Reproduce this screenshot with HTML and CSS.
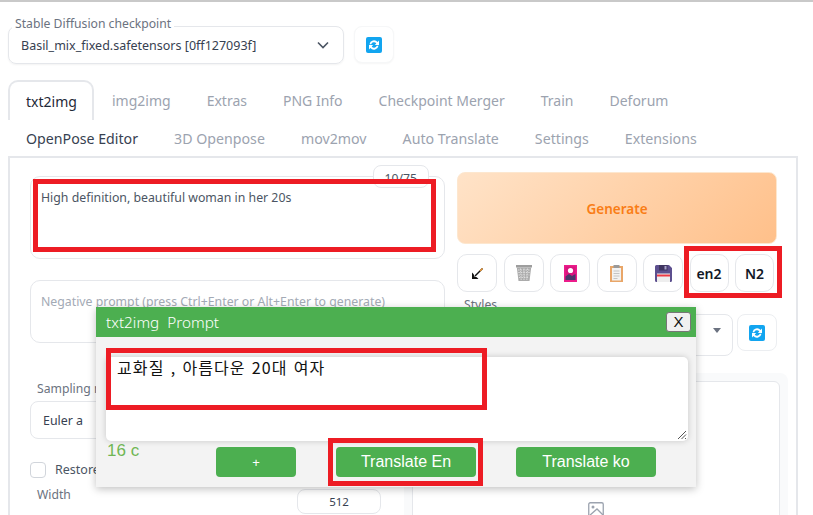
FILE: index.html
```html
<!DOCTYPE html>
<html lang="en">
<head>
<meta charset="utf-8">
<title>Stable Diffusion web UI</title>
<link rel="stylesheet" href="styles.css">
</head>
<body>
<div class="page">
  <div class="checkpoint-row">
    <div class="checkpoint">
      <span class="float-label">Stable Diffusion checkpoint</span>
      <span class="checkpoint-value">Basil_mix_fixed.safetensors [0ff127093f]</span>
      <svg class="chevron" width="12" height="8" viewBox="0 0 12 8"><path d="M1 1.500 6 6.500 11 1.500" fill="none" stroke="#4b5563" stroke-width="1.600"/></svg>
    </div>
    <button class="refresh-btn refresh-top"><svg class="refresh" viewBox="0 0 16 16"><rect width="16" height="16" rx="2" fill="#12a5f0"/><path d="M3.500 7.200A4.600 4.600 0 0 1 11.600 5L13 3.600V8H8.800l1.500-1.500A2.900 2.900 0 0 0 5.200 7.200ZM12.500 8.800A4.600 4.600 0 0 1 4.400 11L3 12.400V8h4.200L5.700 9.500a2.900 2.900 0 0 0 5.100-.7Z" fill="#fff"/></svg></button>
  </div>

  <div class="tabs tabs-first">
    <span class="tab tab-active">txt2img</span>
    <span class="tab">img2img</span>
    <span class="tab">Extras</span>
    <span class="tab">PNG Info</span>
    <span class="tab">Checkpoint Merger</span>
    <span class="tab">Train</span>
    <span class="tab">Deforum</span>
  </div>
  <div class="tabs tabs-second">
    <span class="tab tab-dark">OpenPose Editor</span>
    <span class="tab">3D Openpose</span>
    <span class="tab">mov2mov</span>
    <span class="tab">Auto Translate</span>
    <span class="tab">Settings</span>
    <span class="tab">Extensions</span>
  </div>

  <div class="panel">
    <div class="top-grid">
      <div class="prompts">
        <div class="prompt-box prompt-main">
          <span class="counter">10/75</span>
          High definition, beautiful woman in her 20s
        </div>
        <div class="prompt-box prompt-neg">Negative prompt (press Ctrl+Enter or Alt+Enter to generate)</div>
      </div>
      <div class="actions">
        <div class="generate">Generate</div>
        <div class="tool-row">
          <button class="tool"><svg width="11" height="11" viewBox="0 0 11 11"><path d="M10.500.5 3 8" stroke="#111" stroke-width="1.400" fill="none"/><path d="M10.500.5 8 3" stroke="#e8912d" stroke-width="1.400"/><path d="M0 4.500V11h6.500L4.800 9.300 2.400 8.600 1.700 6.200z" fill="#111"/></svg></button>
          <button class="tool"><svg width="16" height="16" viewBox="0 0 16 16"><path d="M0 0h16v2.500H0z" fill="#9e9e9e"/><path d="M.8 2.500h14.400L13.500 16h-11z" fill="#ababab"/><path d="M2 5h12M2.300 7.500h11.400M2.600 10h10.800M2.900 12.500h10.200M4.500 3.500l.7 12M8 3.500v12M11.500 3.500l-.7 12" stroke="#dedede" stroke-width="1" stroke-dasharray="1.500 1"/></svg></button>
          <button class="tool"><svg width="13" height="17" viewBox="0 0 13 17"><rect width="13" height="17" fill="#ec1c8b"/><rect x="1.500" y="1.500" width="10" height="13.500" fill="#d9167f"/><circle cx="6.500" cy="5.500" r="2.600" fill="#fff"/><path d="M1.500 15v-3.500L5 9l3 2 3.500-2v6z" fill="#4a3a6b"/></svg></button>
          <button class="tool"><svg width="13" height="17" viewBox="0 0 13 17"><rect y="1" width="13" height="16" fill="#e9a668"/><rect x="2" y="3" width="9" height="12.500" fill="#f2f2f2"/><rect x="3.500" width="6" height="3" fill="#9a9a9a"/><path d="M3.500 6h6M3.500 8.500h6M3.500 11h6M3.500 13.500h4" stroke="#c4c4c4"/></svg></button>
          <button class="tool"><svg width="17" height="17" viewBox="0 0 17 17"><path d="M1.500 0H14l3 3v12.500a1.500 1.500 0 0 1-1.500 1.500h-14A1.500 1.500 0 0 1 0 15.500v-14A1.500 1.500 0 0 1 1.500 0z" fill="#5c4f8e"/><rect x="4" width="8.500" height="5.500" fill="#3f3560"/><rect x="9.500" y="1" width="2" height="3.500" fill="#a9a3c9"/><rect x="2" y="8.500" width="13" height="8.500" fill="#eee"/><rect x="2" y="9.500" width="13" height="2" fill="#ee3a45"/></svg></button>
          <button class="tool tool-text">en2</button>
          <button class="tool tool-text">N2</button>
        </div>
        <div class="styles-label">Styles</div>
        <div class="styles-row">
          <div class="styles-select"><span class="caret"></span></div>
          <button class="refresh-btn"><svg class="refresh" viewBox="0 0 16 16"><rect width="16" height="16" rx="2" fill="#12a5f0"/><path d="M3.500 7.200A4.600 4.600 0 0 1 11.600 5L13 3.600V8H8.800l1.500-1.500A2.900 2.900 0 0 0 5.200 7.200ZM12.500 8.800A4.600 4.600 0 0 1 4.400 11L3 12.400V8h4.200L5.700 9.500a2.900 2.900 0 0 0 5.100-.7Z" fill="#fff"/></svg></button>
        </div>
      </div>
    </div>

    <div class="bottom-grid">
      <div class="settings">
        <div class="field-label">Sampling method</div>
        <div class="sampler">Euler a</div>
        <label class="restore"><span class="checkbox"></span>Restore faces</label>
        <div class="width-row">
          <span class="width-label">Width</span>
          <span class="width-input">512</span>
        </div>
        <div class="slider"><span class="thumb"></span></div>
      </div>
      <div class="gallery-wrap">
        <div class="gallery">
          <svg class="placeholder" width="16" height="16" viewBox="0 0 16 16"><rect x=".75" y=".75" width="14.500" height="14.500" rx="1.500" fill="none" stroke="#9ca3af" stroke-width="1.300"/><circle cx="5" cy="5" r="1.500" fill="#9ca3af"/><path d="M1 14 9 7l6 6" fill="none" stroke="#9ca3af" stroke-width="1.300"/></svg>
        </div>
      </div>
    </div>
  </div>

  <div class="modal">
    <div class="modal-head">
      <span class="modal-title">txt2img Prompt</span>
      <button class="modal-close">X</button>
    </div>
    <div class="modal-body">
      <div class="modal-text">교화질 , 아름다운 20대 여자<svg class="grip" width="10" height="10" viewBox="0 0 10 10"><path d="M1 9 9 1M4.500 9 9 4.500M8 9 9 8" stroke="#555" stroke-width="1"/></svg></div>
      <div class="modal-foot">
        <span class="char-count">16 c</span>
        <button class="green green-plus">+</button>
        <button class="green green-en">Translate En</button>
        <button class="green green-ko">Translate ko</button>
      </div>
    </div>
  </div>

  <div class="mark mark-prompt"></div>
  <div class="mark mark-tools"></div>
  <div class="mark mark-modal"></div>
  <div class="mark mark-translate"></div>
</div>
</body>
</html>
```
FILE: styles.css
```css
* { box-sizing: border-box; }
html, body { margin: 0; height: 100%; overflow: hidden; background: #fff; }
body { font-family: "Noto Sans", "Open Sans", sans-serif; color: #374151; }
button { font-family: inherit; padding: 0; margin: 0; }

.page { position: relative; width: 813px; height: 515px; overflow: hidden; border-top: 2px solid #c9c9c9; padding: 24px 15px 0 8px; }

.checkpoint-row { display: flex; gap: 10px; height: 38px; }
.checkpoint { position: relative; width: 336px; height: 38px; border: 1px solid #e5e7eb; border-radius: 8px; display: flex; align-items: center; justify-content: space-between; padding: 0 14px 0 12px; box-shadow: 0 1px 2px rgba(0,0,0,.05); }
.float-label { position: absolute; left: 3px; top: -11px; background: #fff; padding: 0 3px; font-size: 12.200px; line-height: 16px; color: #6b7280; }
.checkpoint-value { font-size: 12.500px; color: #374151; white-space: nowrap; }
.refresh-btn { width: 40px; height: 37px; background: #fff; border: 1px solid #eceef1; border-radius: 8px; display: flex; align-items: center; justify-content: center; }
.refresh-top { border-color: #f6f7f8; box-shadow: 0 1px 2px rgba(0,0,0,.04); }
.refresh { width: 16px; height: 16px; }

.tabs { display: flex; font-size: 14px; color: #9ca3af; white-space: nowrap; }
.tabs-first { margin-top: 16px; height: 40px; align-items: stretch; }
.tabs-second { height: 36px; align-items: center; font-size: 14.200px; }
.tab { padding: 0 18px; display: flex; align-items: center; }
.tab-active { color: #1f2937; width: 86px; border: 2px solid #e5e7eb; border-bottom: none; border-radius: 10px 10px 0 0; padding: 0 16px; }
.tab-dark { color: #374151; }

.panel { height: 400px; border: 2px solid #e5e7eb; border-bottom: none; padding: 14px 20px 0 20px; width: 790px; }
.top-grid { display: grid; grid-template-columns: 415px 320px; column-gap: 12px; }
.prompts { display: flex; flex-direction: column; gap: 21px; padding-top: 4px; }
.prompt-box { position: relative; border: 1px solid #e5e7eb; border-radius: 10px; padding: 12px 10px; font-size: 12.300px; line-height: 17px; color: #4b5563; }
.prompt-main { height: 83px; }
.prompt-neg { height: 63px; color: #a3aab5; }
.counter { position: absolute; right: 15px; top: -12px; height: 23px; padding: 3px 11px 0; background: #fff; border: 1px solid #e5e7eb; border-radius: 8px; font-size: 12.200px; line-height: 20px; color: #4b5563; }

.actions { display: flex; flex-direction: column; }
.generate { height: 72px; padding-top: 2px; border: 1px solid #fde7cf; border-radius: 8px; background: linear-gradient(135deg, #ffe3c8, #ffc08a); color: #f97d16; font-size: 13.500px; font-weight: 600; display: flex; align-items: center; justify-content: center; }
.tool-row { display: flex; gap: 6.500px; margin-top: 10px; }
.tool { width: 40px; height: 38px; flex: none; background: #fff; border: 1px solid #e5e7eb; border-radius: 10px; display: flex; align-items: center; justify-content: center; }
.tool-text { font-size: 14px; font-weight: 600; color: #111827; width: 39px; }
.styles-label { margin: 4px 0 0 7px; font-size: 12.200px; line-height: 17px; color: #6b7280; }
.styles-row { display: flex; gap: 4px; margin-top: 1px; }
.styles-select { position: relative; width: 276px; height: 42px; border: 1px solid #e5e7eb; border-radius: 8px; }
.caret { position: absolute; right: 11px; top: 13px; border: 4px solid transparent; border-top: 5px solid #6b7280; }

.bottom-grid { display: grid; grid-template-columns: 374px 384px; margin-top: 24px; }
.field-label { margin-left: 7px; font-size: 12.200px; line-height: 17px; color: #6b7280; }
.sampler { width: 340px; height: 38px; margin-top: 4px; border: 1px solid #e5e7eb; border-radius: 8px; padding: 0 12px; display: flex; align-items: center; font-size: 12.400px; }
.restore { display: flex; align-items: center; gap: 9px; margin-top: 22px; font-size: 12.500px; color: #4b5563; height: 17px; }
.checkbox { width: 16px; height: 16px; border: 1px solid #d1d5db; border-radius: 4px; background: #fff; }
.width-row { display: flex; justify-content: space-between; margin-top: 8px; width: 351px; padding-left: 7px; }
.width-label { font-size: 12.200px; line-height: 17px; color: #6b7280; }
.width-input { width: 84px; height: 25px; margin-top: 3px; border: 1px solid #e5e7eb; border-radius: 8px; display: flex; align-items: center; justify-content: center; font-size: 11.500px; }
.slider { padding: 1px 0 0 76px; }
.thumb { display: block; width: 10px; height: 10px; border: 1px solid #c4c8cf; border-radius: 50%; background: #fff; }

.gallery-wrap { height: 200px; margin-top: -7px; background: #f9fafb; border-radius: 8px; padding: 8px 8px 0; }
.gallery { height: 190px; background: #fff; border: 1px solid #e5e7eb; border-radius: 6px; padding-top: 120px; display: flex; justify-content: center; }

.modal { position: absolute; left: 96px; top: 305px; width: 600px; height: 180px; background: #f3f3f3; box-shadow: 0 2px 8px rgba(0,0,0,.25); }
.modal-head { height: 30px; background: #4caf50; display: flex; align-items: center; justify-content: space-between; padding: 0 5px 0 10px; }
.modal-title { font-size: 15.300px; color: #fff; font-weight: 300; word-spacing: 4px; }
.modal-close { width: 25px; height: 20px; background: #f0f0f0; border: 1px solid #767676; border-radius: 3px; font-family: "Liberation Sans", sans-serif; font-size: 15px; line-height: 16px; color: #111; }
.modal-body { padding: 20px 8px 0 10px; }
.modal-text { position: relative; height: 84px; background: #fff; border-radius: 5px; padding: 0 11px; font-family: "Noto Sans CJK KR", sans-serif; font-size: 16px; letter-spacing: 1.100px; word-spacing: 1.500px; line-height: 20px; color: #111; box-shadow: 0 0 6px rgba(0,0,0,.18); }
.grip { position: absolute; right: 1px; bottom: 1px; }
.modal-foot { position: relative; display: flex; align-items: flex-start; margin-top: 6px; height: 30px; }
.char-count { position: absolute; left: 1px; top: -6px; color: #6fb654; font-family: "Liberation Sans", sans-serif; font-size: 17px; line-height: 20px; }
.green { height: 30px; border: none; border-radius: 4px; background: #4caf50; color: #fff; font-family: "Liberation Sans", sans-serif; font-size: 16px; }
.green-plus { width: 80px; margin-left: 110px; font-size: 13px; }
.green-en { width: 140px; margin-left: 40px; }
.green-ko { width: 140px; margin-left: 40px; }

.mark { position: absolute; border: 5px solid #ed1c24; pointer-events: none; }
.mark-prompt { left: 33px; top: 177px; width: 403px; height: 73px; }
.mark-tools { left: 684px; top: 244px; width: 98px; height: 52px; }
.mark-modal { left: 106px; top: 346px; width: 381px; height: 62px; }
.mark-translate { left: 328px; top: 436px; width: 155px; height: 48px; }
```
